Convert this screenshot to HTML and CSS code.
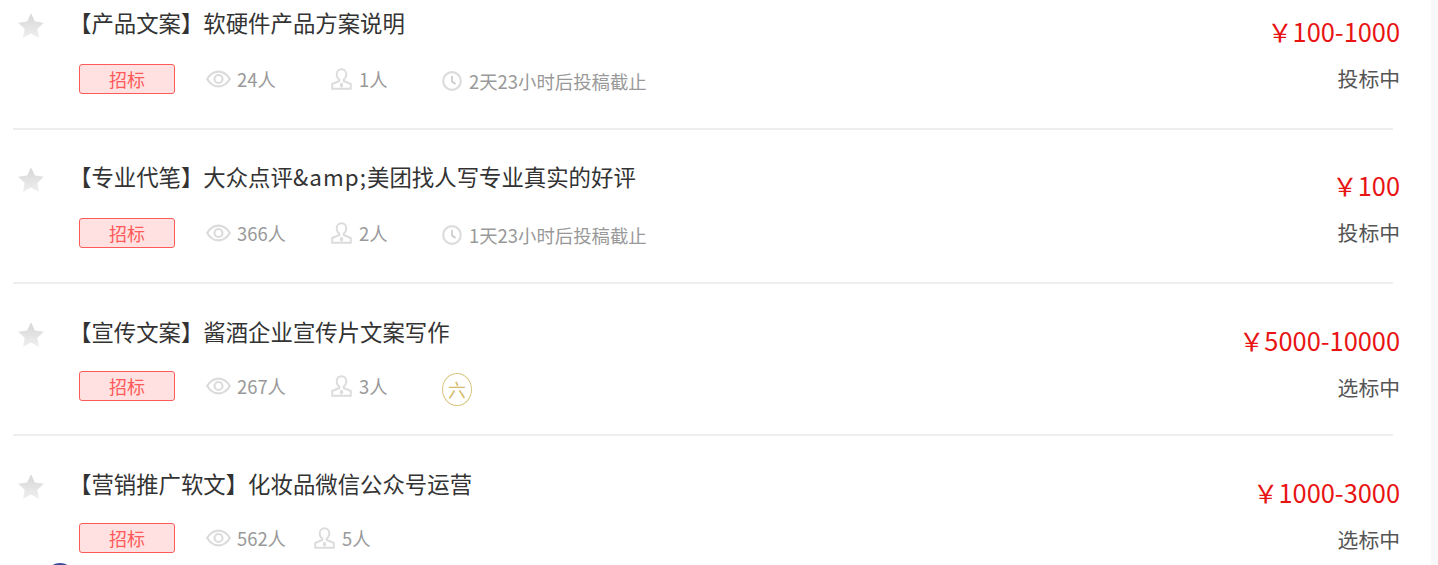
FILE: index.html
```html
<!DOCTYPE html>
<html lang="zh-CN">
<head>
    <meta charset="UTF-8">
    <meta name="viewport" content="width=device-width, initial-scale=1.0">
    <title>任务列表</title>
    <link rel="stylesheet" href="styles.css">
</head>
<body>
    <!-- Shared icons -->
    <svg class="icon-defs" width="0" height="0">
        <defs>
            <linearGradient id="starFill" x1="0" y1="0" x2="0" y2="1">
                <stop offset="0" stop-color="#d6d6d6"/>
                <stop offset="1" stop-color="#efefef"/>
            </linearGradient>
            <symbol id="iconStar" viewBox="0 0 26 26">
                <path fill="url(#starFill)" d="M13 .3l3.900 8.300 9 1.100-6.600 6.200 1.700 9-8-4.500-8 4.500 1.700-9-6.600-6.200 9-1.100z"/>
            </symbol>
            <symbol id="iconEye" viewBox="0 0 25 18">
                <path fill="none" stroke="#dcdcdc" stroke-width="2.200" d="M1.200 9C4 4.200 8 1.600 12.500 1.600s8.500 2.600 11.300 7.400c-2.800 4.800-6.800 7.400-11.300 7.400S4 13.800 1.200 9z"/>
                <circle cx="12.500" cy="9" r="4" fill="none" stroke="#dcdcdc" stroke-width="2.200"/>
            </symbol>
            <symbol id="iconUser" viewBox="0 0 21 22">
                <path fill="none" stroke="#dcdcdc" stroke-width="1.900" d="M10.500 1.200c-3 0-4.800 2.200-4.800 5 0 2.200 1 4.200 2.600 5.300v1.500L1.200 16v4.800h18.600V16l-7.100-3v-1.500c1.600-1.100 2.600-3.100 2.600-5.300 0-2.800-1.800-5-4.800-5z"/>
                <path fill="#dcdcdc" d="M9.300 15h2.400l.6 3-1.800 2-1.800-2z"/>
            </symbol>
            <symbol id="iconClock" viewBox="0 0 20 20">
                <circle cx="10" cy="10" r="8.800" fill="none" stroke="#dcdcdc" stroke-width="2.200"/>
                <path fill="none" stroke="#c8c8c8" stroke-width="1.600" d="M10 5v5.500l3.500 2.500"/>
            </symbol>
        </defs>
    </svg>

    <div class="page">
        <ul class="task-list">
            <li class="task task-timed">
                <svg class="star"><use href="#iconStar"/></svg>
                <div class="task-main">
                    <div class="task-title">【产品文案】软硬件产品方案说明</div>
                    <div class="task-meta">
                        <span class="tag">招标</span>
                        <span class="stat stat-views"><svg class="icon-eye"><use href="#iconEye"/></svg>24人</span>
                        <span class="stat stat-people"><svg class="icon-user"><use href="#iconUser"/></svg>1人</span>
                        <span class="stat stat-time"><svg class="icon-clock"><use href="#iconClock"/></svg>2天23小时后投稿截止</span>
                    </div>
                </div>
                <div class="task-side">
                    <div class="price">￥100-1000</div>
                    <div class="status">投标中</div>
                </div>
            </li>
            <li class="task task-timed">
                <svg class="star"><use href="#iconStar"/></svg>
                <div class="task-main">
                    <div class="task-title">【专业代笔】大众点评<span class="latin">&amp;amp;</span>美团找人写专业真实的好评</div>
                    <div class="task-meta">
                        <span class="tag">招标</span>
                        <span class="stat stat-views"><svg class="icon-eye"><use href="#iconEye"/></svg>366人</span>
                        <span class="stat stat-people"><svg class="icon-user"><use href="#iconUser"/></svg>2人</span>
                        <span class="stat stat-time"><svg class="icon-clock"><use href="#iconClock"/></svg>1天23小时后投稿截止</span>
                    </div>
                </div>
                <div class="task-side">
                    <div class="price">￥100</div>
                    <div class="status">投标中</div>
                </div>
            </li>
            <li class="task">
                <svg class="star"><use href="#iconStar"/></svg>
                <div class="task-main">
                    <div class="task-title">【宣传文案】酱酒企业宣传片文案写作</div>
                    <div class="task-meta">
                        <span class="tag">招标</span>
                        <span class="stat stat-views"><svg class="icon-eye"><use href="#iconEye"/></svg>267人</span>
                        <span class="stat stat-people"><svg class="icon-user"><use href="#iconUser"/></svg>3人</span>
                        <span class="stage">六</span>
                    </div>
                </div>
                <div class="task-side">
                    <div class="price">￥5000-10000</div>
                    <div class="status">选标中</div>
                </div>
            </li>
            <li class="task">
                <svg class="star"><use href="#iconStar"/></svg>
                <div class="task-main">
                    <div class="task-title">【营销推广软文】化妆品微信公众号运营</div>
                    <div class="task-meta">
                        <span class="tag">招标</span>
                        <span class="stat"><svg class="icon-eye"><use href="#iconEye"/></svg>562人</span>
                        <span class="stat"><svg class="icon-user"><use href="#iconUser"/></svg>5人</span>
                    </div>
                </div>
                <div class="task-side">
                    <div class="price">￥1000-3000</div>
                    <div class="status">选标中</div>
                </div>
                <span class="avatar"></span>
            </li>
        </ul>
    </div>
</body>
</html>
```

FILE: styles.css
```css
html, body {
    height: 565px;
    overflow: hidden;
}

body {
    margin: 0;
    font-family: "Noto Sans CJK SC", "Liberation Sans", sans-serif;
    background-color: #f8f8f8;
}

.icon-defs {
    display: block;
    height: 0;
}

.page {
    width: 1431px;
    height: 565px;
    background-color: #fff;
    overflow: hidden;
}

.task-list {
    list-style: none;
    width: 1380px;
    margin: -24px 0 0 13px;
    padding: 0;
}

.task {
    position: relative;
    display: flex;
    box-sizing: border-box;
    height: 152px;
    padding-top: 29px;
    border-bottom: 2px solid #eee;
}

.task-timed {
    height: 154px;
    padding-top: 28px;
}

.star {
    width: 26px;
    height: 26px;
    margin: 9px 0 0 5px;
    flex-shrink: 0;
}

.task-main {
    flex: 1;
    margin-left: 35px;
}

.task-title {
    height: 36px;
    margin-left: -10px;
    font-size: 22.4px;
    line-height: 36px;
    color: #333;
}

.latin {
    letter-spacing: 1.1px;
}

.task-meta {
    display: flex;
    align-items: center;
    margin-top: 22px;
    font-size: 18.4px;
    color: #999;
}

.task-timed .task-meta {
    margin-top: 24px;
}

.tag {
    width: 94px;
    height: 28px;
    font-size: 18px;
    line-height: 28px;
    text-align: center;
    color: #ff5a5a;
    background-color: #ffe1e1;
    border: 1px solid #ff5a5a;
    border-radius: 3px;
}

.stat {
    display: flex;
    align-items: center;
    margin-left: 31px;
}

.task-meta .stat + .stat {
    margin-left: 28px;
}

.stat-views {
    width: 97px;
}

.task-meta .stat.stat-people {
    width: 111px;
    margin-left: 28px;
}

.task-meta .stat.stat-time {
    margin-left: 0;
    margin-top: 3px;
}

.icon-eye {
    width: 25px;
    height: 18px;
    margin-right: 6px;
}

.icon-user {
    width: 21px;
    height: 22px;
    margin-right: 7px;
}

.icon-clock {
    width: 20px;
    height: 20px;
    margin-right: 7px;
}

.stage {
    width: 28px;
    height: 31px;
    margin-bottom: -6px;
    font-size: 18px;
    line-height: 31px;
    text-align: center;
    color: #d4bc6a;
    border: 1px solid #d9c67f;
    border-radius: 50%;
}

.task-side {
    width: 220px;
    margin-right: -7px;
    text-align: right;
    flex-shrink: 0;
}

.price {
    margin-top: 9px;
    font-size: 25.4px;
    line-height: 36px;
    color: #e81414;
}

.status {
    margin-top: 14px;
    font-size: 20.8px;
    line-height: 30px;
    color: #555;
}

.avatar {
    position: absolute;
    left: 32px;
    top: 127px;
    width: 30px;
    height: 30px;
    border-radius: 50%;
    background-color: #3f4a9a;
}
```
